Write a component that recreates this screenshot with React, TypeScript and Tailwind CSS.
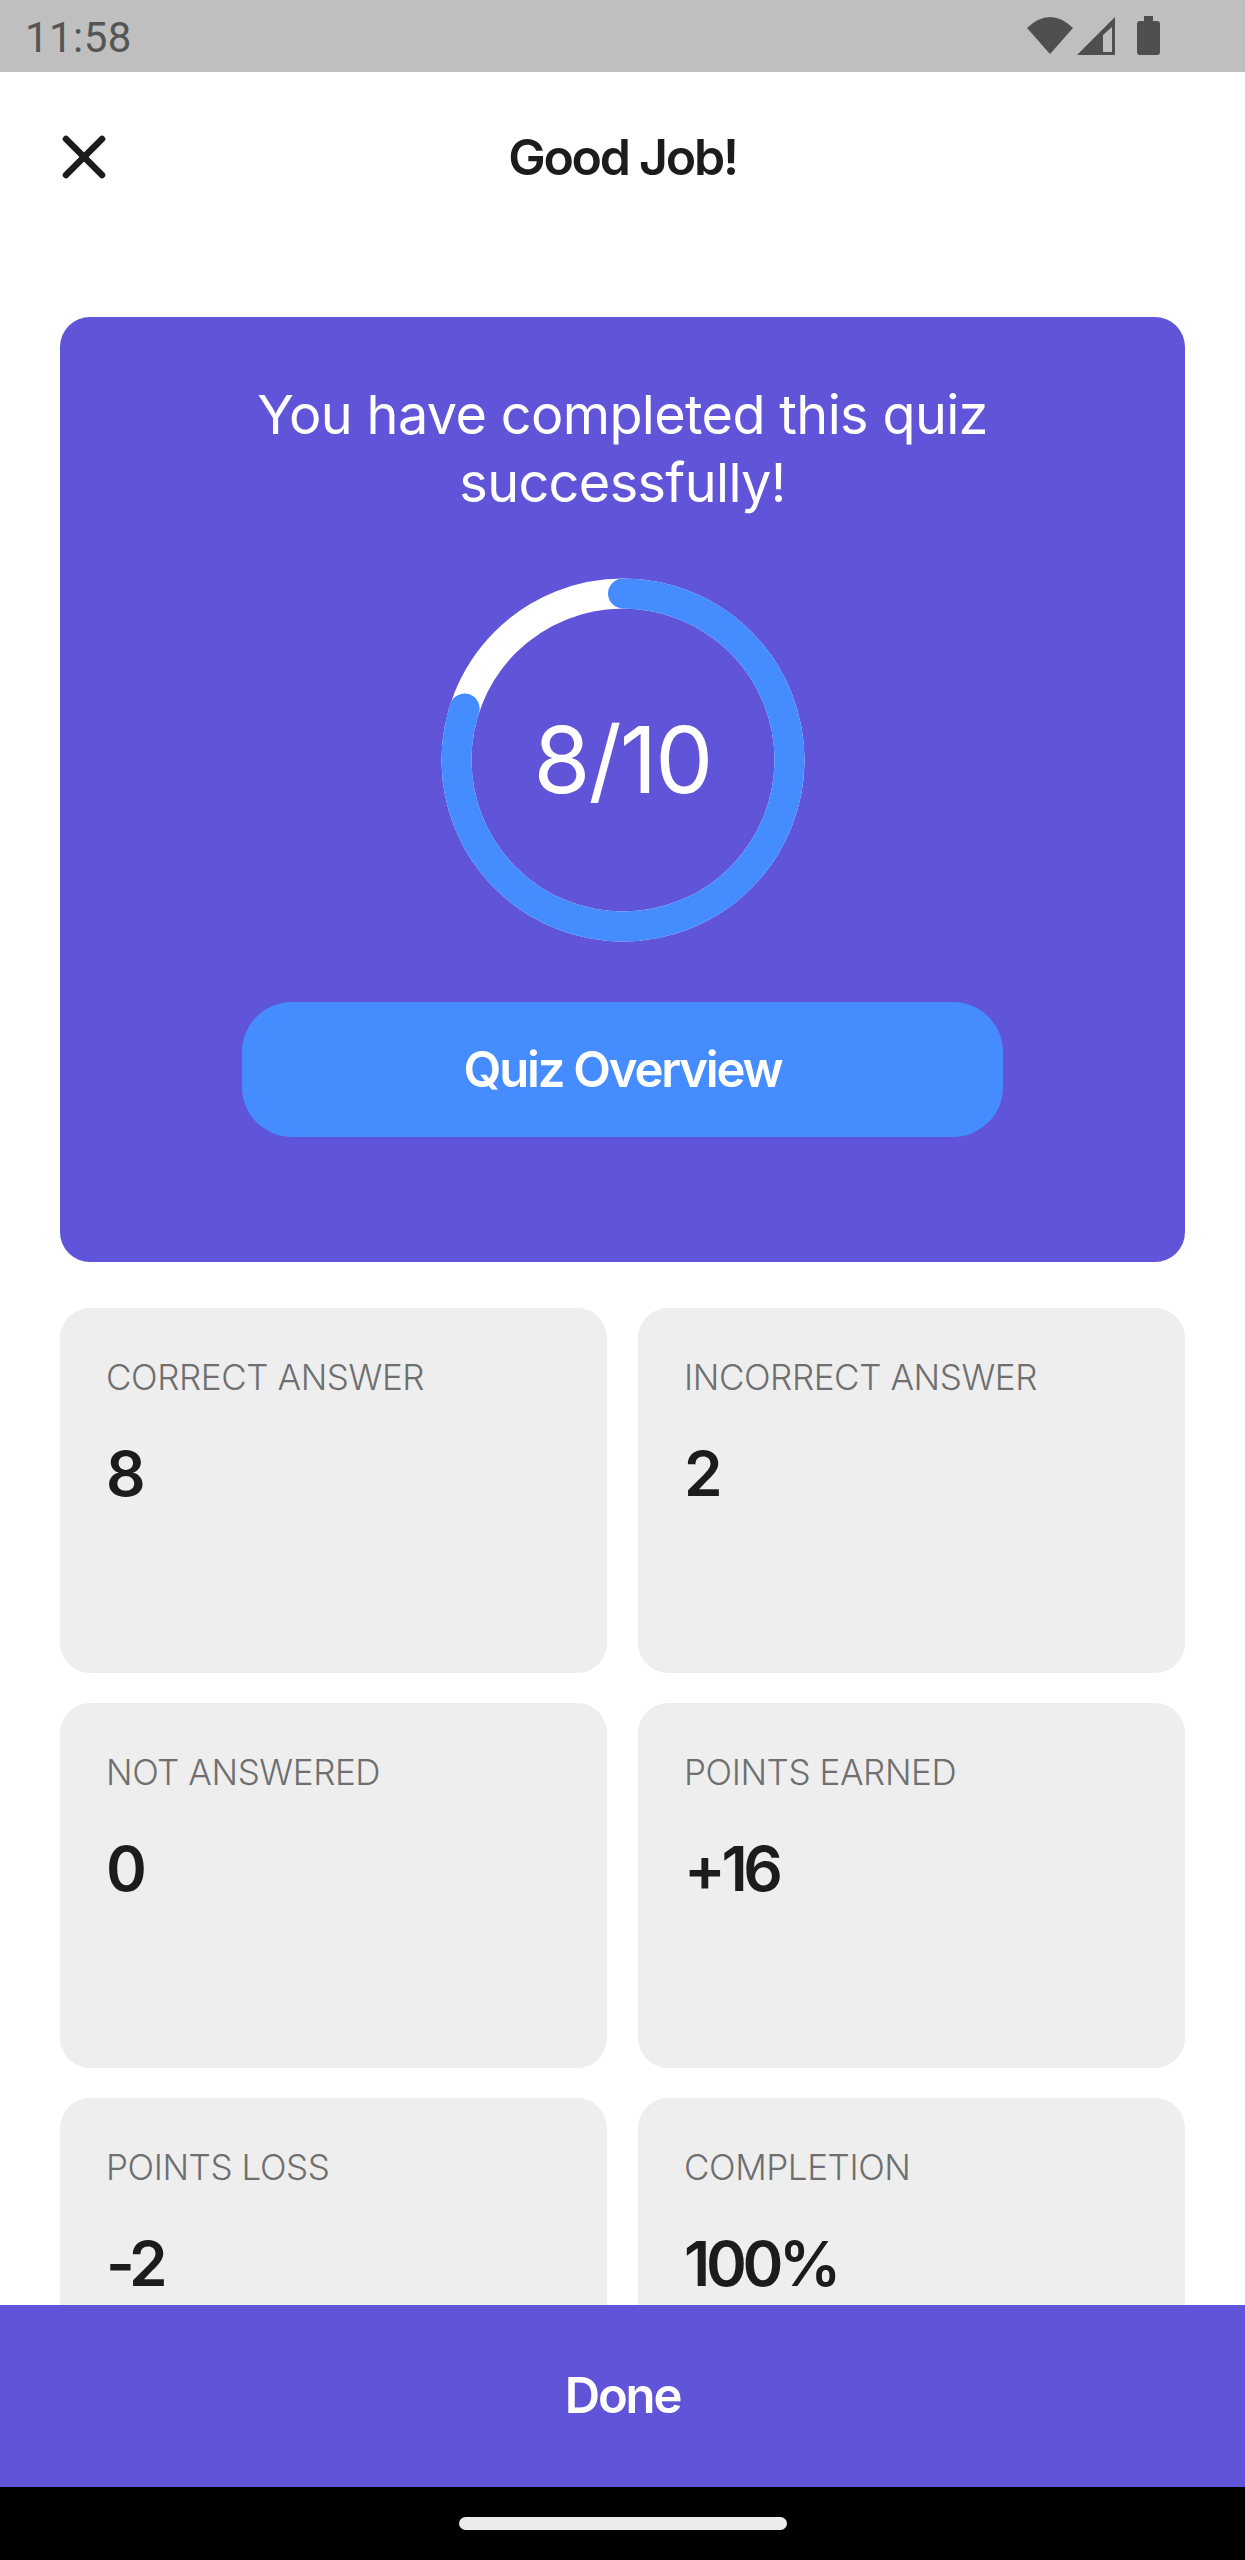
import { X } from "lucide-react";

const STATS = [
  { label: "CORRECT ANSWER", value: "8" },
  { label: "INCORRECT ANSWER", value: "2" },
  { label: "NOT ANSWERED", value: "0" },
  { label: "POINTS EARNED", value: "+16" },
  { label: "POINTS LOSS", value: "-2" },
  { label: "COMPLETION", value: "100%" },
];

const StatusIcons = () => (
  <svg width="134" height="44" viewBox="0 0 134 44" fill="#4f4f4f">
    {/* wifi */}
    <path d="M0 14 Q23 -8 46 14 L23 40 Z" />
    {/* signal */}
    <path d="M50 41 L88 3 V41 Z M76 38 H85 V13 L76 21 Z" fillRule="evenodd" />
    {/* battery */}
    <path d="M117 2 H126 V7 H130 Q133 7 133 10 V38 Q133 41 130 41 H113 Q110 41 110 38 V10 Q110 7 113 7 H117 Z" />
  </svg>
);

const ScoreRing = () => (
  <div className="relative h-[364px] w-[364px]">
    <svg width="364" height="364" viewBox="0 0 364 364" className="-rotate-90">
      <circle cx="182" cy="182" r="166.5" fill="none" stroke="#ffffff" strokeWidth="30" />
      <circle
        cx="182"
        cy="182"
        r="166.5"
        fill="none"
        stroke="#448cff"
        strokeWidth="30"
        strokeLinecap="round"
        pathLength={100}
        strokeDasharray="80 20"
      />
    </svg>
    <div className="absolute inset-0 flex items-center justify-center text-[92px] font-normal leading-none tracking-[-0.02em] text-white">
      8/10
    </div>
  </div>
);

const StatCard = ({ label, value }: { label: string; value: string }) => (
  <div className="h-[365px] rounded-[30px] bg-[#eeeeee] px-[46px] pt-[49px]">
    <p className="text-[35px] font-light leading-[40px] tracking-[-0.012em] text-[#6f6f6f]">{label}</p>
    <p className="mt-[41px] text-[62px] font-semibold leading-[72px] tracking-[-0.07em] text-[#1c1c1c]">{value}</p>
  </div>
);

export default function App() {
  return (
    <div className="flex h-[2560px] w-[1245px] flex-col overflow-hidden bg-white font-['Inter',sans-serif]">
      {/* Status bar */}
      <div className="flex h-[72px] shrink-0 items-center justify-between bg-[#bfbfbf] pl-[25px] pr-[84px]">
        <span className="mt-[4px] font-['Roboto',sans-serif] text-[42px] leading-none tracking-[0.01em] text-[#555555]">11:58</span>
        <StatusIcons />
      </div>

      {/* Header */}
      <div className="relative flex h-[170px] shrink-0 items-center justify-center">
        <X className="absolute left-[48px] top-[49px] h-[72px] w-[72px] text-[#1c1c1c]" strokeWidth={2.2} />
        <h1 className="text-[50px] font-semibold tracking-[-0.045em] text-[#1c1c1c]">Good Job!</h1>
      </div>

      {/* Scrolling content */}
      <div className="flex min-h-0 flex-1 flex-col gap-[46px] overflow-hidden px-[60px] pt-[75px]">
        <section className="flex h-[945px] shrink-0 flex-col items-center rounded-[30px] bg-[#6055d8] pt-[64px]">
          <p className="w-[800px] text-center text-[54px] font-normal leading-[68px] tracking-[-0.012em] text-white">
            You have completed this quiz successfully!
          </p>
          <div className="mt-[61px]">
            <ScoreRing />
          </div>
          <button className="mt-[60px] h-[135px] w-[761px] rounded-[50px] bg-[#448cff] text-[49px] font-semibold tracking-[-0.045em] text-white">
            Quiz Overview
          </button>
        </section>

        <div className="grid shrink-0 grid-cols-2 gap-x-[31px] gap-y-[30px]">
          {STATS.map((s) => (
            <StatCard key={s.label} label={s.label} value={s.value} />
          ))}
        </div>
      </div>

      {/* Done bar */}
      <button className="h-[182px] shrink-0 bg-[#6055d8] text-[49px] font-semibold tracking-[-0.045em] text-white">
        Done
      </button>

      {/* Nav bar */}
      <div className="flex h-[73px] shrink-0 justify-center bg-black pt-[30px]">
        <div className="h-[13px] w-[328px] rounded-full bg-[#ececec]" />
      </div>
    </div>
  );
}
